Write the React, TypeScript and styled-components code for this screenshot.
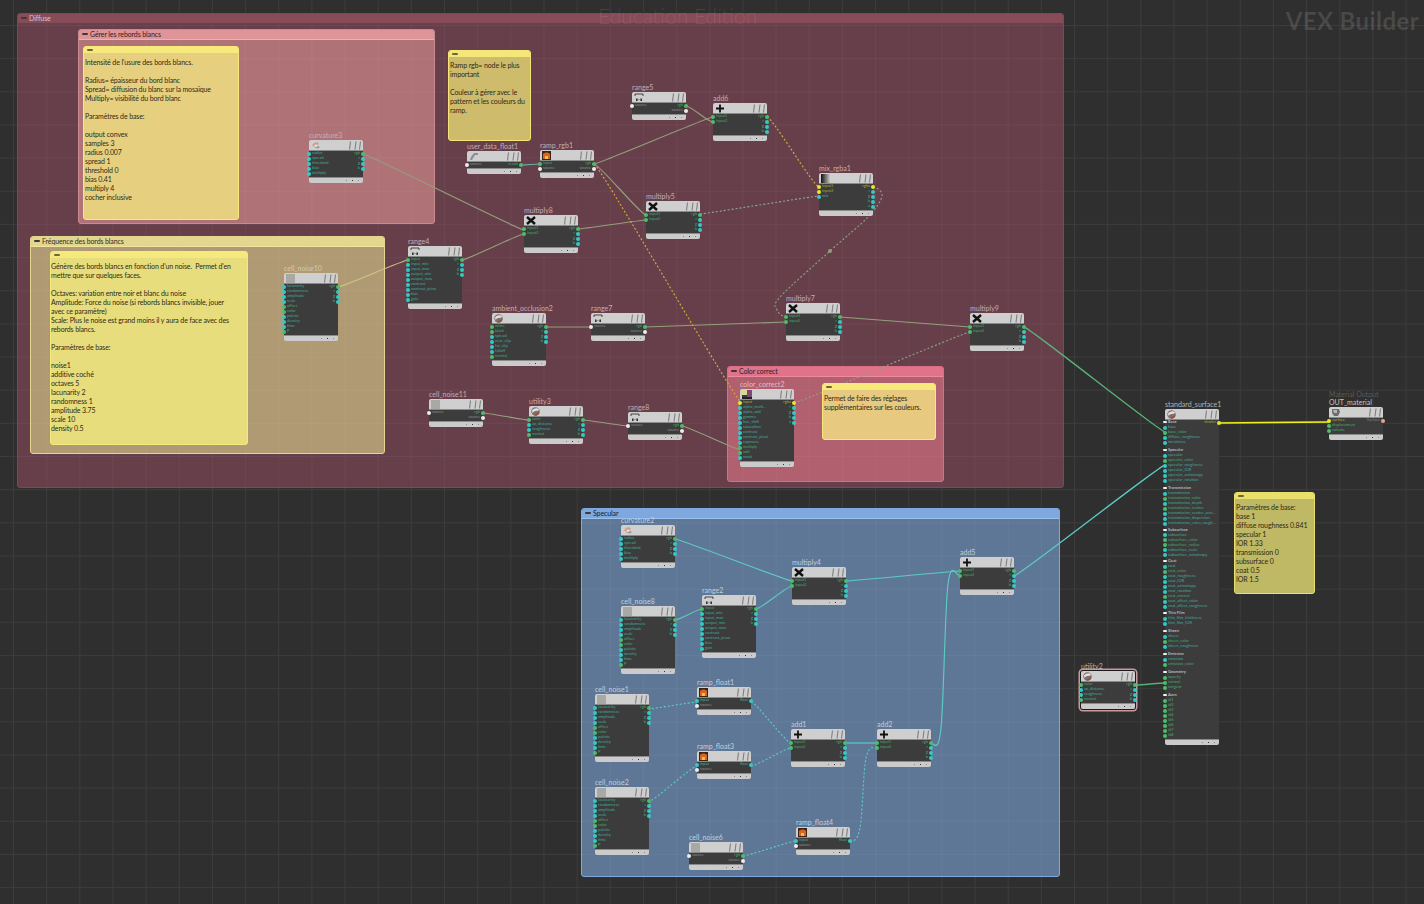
import React from 'react';
import styled, { createGlobalStyle } from 'styled-components';

const Global = createGlobalStyle`
  html, body { margin: 0; padding: 0; background: #2f2f2f; overflow: hidden; }
  body { font-family: Lato, "Noto Sans", sans-serif; }
`;

const S = {
  Canvas: styled.div`
    position: relative;
    width: 1424px;
    height: 904px;
    overflow: hidden;
    background-color: #2f2f2f;
    background-image:
      linear-gradient(to right, #3c3c3c 1px, transparent 1px),
      linear-gradient(to bottom, #3c3c3c 1px, transparent 1px);
    background-size: 33.16px 33.16px;
    background-position: 13px 25px;
  `,
  Group: styled.div<{ $x: number; $y: number; $w: number; $h: number; $bg: string; $edge: string }>`
    position: absolute;
    left: ${p => p.$x}px;
    top: ${p => p.$y}px;
    width: ${p => p.$w}px;
    height: ${p => p.$h}px;
    box-sizing: border-box;
    background: ${p => p.$bg};
    border: 1px solid ${p => p.$edge};
    border-radius: 3px;
    background-image:
      linear-gradient(to right, rgba(255,255,255,.035) 1px, transparent 1px),
      linear-gradient(to bottom, rgba(255,255,255,.035) 1px, transparent 1px);
    background-size: 33.16px 33.16px;
    background-position: ${p => ((13 - p.$x) % 33.16) - 1}px ${p => ((25 - p.$y) % 33.16) - 1}px;
  `,
  GroupBar: styled.div<{ $bg: string; $line: string; $ink: string }>`
    display: flex;
    align-items: center;
    gap: 2px;
    box-sizing: border-box;
    height: 10px;
    padding: 0 0 1px 3px;
    background: ${p => p.$bg};
    border-bottom: 1px solid ${p => p.$line};
    border-radius: 2px 2px 0 0;
    color: ${p => p.$ink};
    font-size: 7px;
    line-height: 8px;
    letter-spacing: -0.12px;
    white-space: nowrap;
  `,
  Dash: styled.span<{ $soft?: boolean }>`
    flex: none;
    width: 6px;
    height: 2px;
    background: ${p => (p.$soft ? '#6b6640' : '#3a3a3a')};
    border-radius: 1px;
  `,
  Note: styled.div<{ $x: number; $y: number; $w: number; $h: number; $bg: string; $bar: string }>`
    position: absolute;
    left: ${p => p.$x}px;
    top: ${p => p.$y}px;
    width: ${p => p.$w}px;
    height: ${p => p.$h}px;
    display: flex;
    flex-direction: column;
    box-sizing: border-box;
    background: ${p => p.$bg};
    border: 1px solid ${p => p.$bar};
    border-radius: 3px;
  `,
  NoteBar: styled.div<{ $bar: string }>`
    flex: none;
    display: flex;
    align-items: center;
    height: 6px;
    padding-left: 3px;
    background: ${p => p.$bar};
    border-radius: 2px 2px 0 0;
  `,
  NoteText: styled.div<{ $top: number; $left: number }>`
    padding: ${p => p.$top}px 0 0 ${p => p.$left}px;
    color: #2e2a14;
    font-size: 7px;
    line-height: 9px;
    letter-spacing: -0.12px;
    white-space: pre-wrap;
  `,
  Wires: styled.svg`
    position: absolute;
    left: 0;
    top: 0;
  `,
  Node: styled.div<{ $x: number; $y: number; $selected?: boolean }>`
    position: absolute;
    left: ${p => p.$x}px;
    top: ${p => p.$y}px;
    width: 54px;
    display: flex;
    flex-direction: column;
    border-radius: 2px;
    ${p => p.$selected && 'box-shadow: 0 0 0 1px #1c1c1c, 0 0 0 2.5px #c99a9d;'}
  `,
  Label: styled.div<{ $ink: string }>`
    position: absolute;
    left: 0;
    bottom: calc(100% + 1px);
    color: ${p => p.$ink};
    font-size: 7px;
    line-height: 8px;
    white-space: nowrap;
  `,
  SubLabel: styled.div`
    color: #5a5a5a;
    font-size: 7px;
    line-height: 7px;
  `,
  Head: styled.div`
    flex: none;
    height: 10px;
    display: flex;
    align-items: center;
    justify-content: space-between;
    padding: 0 1px 0 2px;
    background: #cfcfcf;
    border-bottom: 1px solid #8b8b8b;
    border-radius: 2px 2px 0 0;
  `,
  Body: styled.div`
    display: flex;
    justify-content: space-between;
    padding-bottom: 1px;
    background: #3c3c3c;
  `,
  Col: styled.div<{ $fill?: boolean }>`
    display: flex;
    flex-direction: column;
    ${p => p.$fill && 'flex: 1 1 0; min-width: 0;'}
  `,
  Row: styled.div<{ $out?: boolean; $ink: string }>`
    position: relative;
    height: 5px;
    padding: 0 3px;
    color: ${p => p.$ink};
    font-size: 4px;
    line-height: 4px;
    text-align: ${p => (p.$out ? 'right' : 'left')};
    white-space: nowrap;
  `,
  Port: styled.i<{ $out?: boolean; $color: string }>`
    position: absolute;
    top: 0.5px;
    ${p => (p.$out ? 'right: -2px;' : 'left: -2px;')}
    width: 4px;
    height: 4px;
    border-radius: 50%;
    background: ${p => p.$color};
  `,
  Section: styled.div<{ $gap: number }>`
    position: relative;
    height: 5px;
    margin-top: ${p => p.$gap}px;
    padding-left: 3px;
    color: #b9b9b9;
    font-size: 4px;
    font-weight: 700;
    line-height: 4px;
    white-space: nowrap;
  `,
  SectionTick: styled.i`
    position: absolute;
    left: -2px;
    top: 1px;
    width: 4px;
    height: 2px;
    background: #f2f2f2;
    border-radius: 1px;
  `,
  Foot: styled.div`
    flex: none;
    height: 5px;
    display: flex;
    align-items: center;
    justify-content: flex-end;
    gap: 5px;
    padding-right: 4px;
    background: #cbcbcb;
    border-top: 1px solid #8b8b8b;
    border-radius: 0 0 2px 2px;
  `,
  Pip: styled.i<{ $on?: boolean }>`
    width: 1px;
    height: 1px;
    background: ${p => (p.$on ? '#333' : '#888')};
  `,
  Mark: styled.div<{ $right?: boolean; $bold?: boolean }>`
    position: absolute;
    top: ${p => (p.$bold ? 9 : 4)}px;
    ${p => (p.$right ? 'right: 5px;' : 'left: 598px;')}
    color: rgba(255, 255, 255, ${p => (p.$bold ? 0.12 : 0.09)});
    font-size: ${p => (p.$bold ? 24 : 21)}px;
    font-weight: ${p => (p.$bold ? 700 : 300)};
    letter-spacing: ${p => (p.$bold ? 0.4 : 0)}px;
    line-height: 24px;
    white-space: nowrap;
  `,
};

type IconKind = 'mul' | 'add' | 'range' | 'noise' | 'curv' | 'ramp' | 'ball' | 'mix' | 'cc' | 'user' | 'out';

const Icon = ({ kind }: { kind: IconKind }) => {
  switch (kind) {
    case 'mul':
      return (
        <svg width="10" height="9" viewBox="0 0 10 9">
          <path d="M1 1 L9 8 M9 1 L1 8" stroke="#111" strokeWidth="2.4" />
        </svg>
      );
    case 'add':
      return (
        <svg width="10" height="9" viewBox="0 0 10 9">
          <path d="M1 4.5 H9 M5 .5 V8.5" stroke="#111" strokeWidth="1.8" />
        </svg>
      );
    case 'range':
      return (
        <svg width="10" height="9" viewBox="0 0 10 9">
          <path d="M1 3 V1 H9 V3" stroke="#222" strokeWidth=".8" fill="none" />
          <rect x="2" y="5.5" width="1.6" height="2.5" fill="#333" />
          <rect x="6.4" y="5.5" width="1.6" height="2.5" fill="#333" />
          <rect x="3.6" y="6.4" width="2.8" height=".6" fill="#777" />
        </svg>
      );
    case 'noise':
      return (
        <svg width="9" height="9" viewBox="0 0 9 9">
          <rect width="9" height="9" fill="#a8a8a4" />
        </svg>
      );
    case 'curv':
      return (
        <svg width="10" height="9" viewBox="0 0 10 9">
          <path d="M1 5 C2 1 7 0 8 3 L6 4 C5 3 4 3 3 5 Z" fill="#d79a86" />
          <path d="M3 5 C4 8 8 8 9 6 L7 5 Z" fill="#9a9a9a" />
          <circle cx="5" cy="5" r="1" fill="#eee" />
        </svg>
      );
    case 'ramp':
      return (
        <svg width="9" height="9" viewBox="0 0 9 9">
          <rect width="9" height="9" fill="#3a2418" />
          <path d="M1 8 V3 C3 1 6 1 8 3 V8 H6 V5 H3 V8 Z" fill="#d8641f" />
          <rect x="3" y="5" width="3" height="3" fill="#e8c24a" />
        </svg>
      );
    case 'ball':
      return (
        <svg width="9" height="9" viewBox="0 0 9 9">
          <circle cx="4.5" cy="4.5" r="4.2" fill="#7e6f70" />
          <path d="M1 3.5 C3 1 6 .5 8 2 L7 4 C5 3.5 3 4 1.5 6 Z" fill="#e6e0dc" />
          <path d="M3 8 C5 7 7 6 8.5 5 L8 7 L5 8.8 Z" fill="#9b4a3c" />
        </svg>
      );
    case 'mix':
      return (
        <svg width="10" height="9" viewBox="0 0 10 9">
          <defs>
            <linearGradient id="mixg" x1="0" x2="1" y1="0" y2="0">
              <stop offset="0" stopColor="#111" />
              <stop offset="1" stopColor="#ddd" />
            </linearGradient>
          </defs>
          <rect width="10" height="9" fill="url(#mixg)" />
        </svg>
      );
    case 'cc':
      return (
        <svg width="10" height="9" viewBox="0 0 10 9">
          <rect width="5" height="5" fill="#d8d890" />
          <rect x="5" width="5" height="7" fill="#7d4a78" />
          <rect y="5" width="5" height="2" fill="#3a3a3a" />
          <rect y="7" width="10" height="2" fill="#222" />
        </svg>
      );
    case 'user':
      return (
        <svg width="10" height="9" viewBox="0 0 10 9">
          <path d="M5 1 H9 V3 H6 L3 8 H1 L2 5 Z" fill="#8e8e8e" />
        </svg>
      );
    default:
      return (
        <svg width="10" height="9" viewBox="0 0 10 9">
          <path d="M1 1 H8 L9 4 L7 8 H3 L1 5 Z" fill="#6d6d6d" />
          <path d="M2 2 H6 V5 H3 Z" fill="#b5b5b5" />
        </svg>
      );
  }
};

const Bars = () => (
  <svg width="15" height="9" viewBox="0 0 15 9">
    <path d="M2.5 8.5 L3.5 .5 M8 8.5 L9 .5 M12.5 8.5 L13.5 .5" stroke="#7f7f7f" strokeWidth="1.1" />
  </svg>
);

const PORTS: Record<string, { dot: string; ink: string }> = {
  c: { dot: '#35c9c3', ink: '#42a898' },
  g: { dot: '#4fbb6c', ink: '#46a86a' },
  w: { dot: '#ececec', ink: '#8d8d8d' },
  y: { dot: '#e6e92a', ink: '#a9ad2a' },
  o: { dot: '#e3a48f', ink: '#8f7a70' },
};

// "+name" green, "!name" white, "*name" yellow, "~name" salmon, anything else cyan
const parsePort = (raw: string) => {
  const code = raw[0];
  if (code === '+') return { name: raw.slice(1), ...PORTS.g };
  if (code === '!') return { name: raw.slice(1), ...PORTS.w };
  if (code === '*') return { name: raw.slice(1), ...PORTS.y };
  if (code === '~') return { name: raw.slice(1), ...PORTS.o };
  return { name: raw, ...PORTS.c };
};

const PortRows = ({ list, out }: { list: string[]; out?: boolean }) => (
  <>
    {list.map(raw => {
      const p = parsePort(raw);
      return (
        <S.Row key={raw} $out={out} $ink={p.ink}>
          {p.name}
          <S.Port $out={out} $color={p.dot} />
        </S.Row>
      );
    })}
  </>
);

const Ports = ({ list, out }: { list: string[]; out?: boolean }) => (
  <S.Col>
    <PortRows list={list} out={out} />
  </S.Col>
);

interface INode {
  name: string;
  x: number;
  y: number;
  icon: IconKind;
  ins: string[];
  outs: string[];
  ink?: string;
  selected?: boolean;
}

const RGB = ['+rgb', 'r', 'g', 'b'];
const MUL = ['+input1', '+input2'];
const RANGE = ['+input', 'input_min', 'input_max', 'output_min', 'output_max', 'contrast', 'contrast_pivot', 'bias', 'gain'];
const NOISE = ['lacunarity', 'randomness', 'amplitude', 'scale', '+offset', '+color', 'palette', 'density', 'time', '+P'];
const CURV = ['radius', 'spread', 'threshold', 'bias', 'multiply'];
const UTIL = ['+color', 'ao_distance', 'roughness', '+normal'];
const SRC = ['!source'];
const RAMP_RGB = ['+input', '!source'];
const OUT_RGB = ['+rgb', '!source'];
const RAMP_F = ['input', '!source'];
const OUT_F = ['float'];

const PINK = '#c3aeb4';
const TAN = '#d6c8ab';
const BLUE = '#c3ced9';
const GREY = '#b4b4b4';

const NODES: INode[] = [
  { name: 'curvature3', x: 309, y: 140, icon: 'curv', ins: CURV, outs: RGB, ink: '#c9aeb0' },
  { name: 'user_data_float1', x: 467, y: 151, icon: 'user', ins: SRC, outs: ['+result'], ink: PINK },
  { name: 'ramp_rgb1', x: 540, y: 150, icon: 'ramp', ins: RAMP_RGB, outs: OUT_RGB, ink: PINK },
  { name: 'range5', x: 632, y: 92, icon: 'range', ins: SRC, outs: OUT_RGB, ink: PINK },
  { name: 'add6', x: 713, y: 103, icon: 'add', ins: MUL, outs: RGB, ink: PINK },
  { name: 'mix_rgba1', x: 819, y: 173, icon: 'mix', ins: ['*input1', '*input2', 'mix'], outs: ['*rgba', 'r', 'g', 'b', 'a'], ink: PINK },
  { name: 'multiply8', x: 524, y: 215, icon: 'mul', ins: MUL, outs: RGB, ink: PINK },
  { name: 'multiply5', x: 646, y: 201, icon: 'mul', ins: MUL, outs: RGB, ink: PINK },
  { name: 'range4', x: 408, y: 246, icon: 'range', ins: RANGE, outs: RGB, ink: PINK },
  { name: 'cell_noise10', x: 284, y: 273, icon: 'noise', ins: NOISE, outs: RGB, ink: TAN },
  { name: 'ambient_occlusion2', x: 492, y: 313, icon: 'ball', ins: ['+white', '+black', 'spread', 'near_clip', 'far_clip', 'falloff', '+normal'], outs: RGB, ink: PINK },
  { name: 'range7', x: 591, y: 313, icon: 'range', ins: SRC, outs: OUT_RGB, ink: PINK },
  { name: 'multiply7', x: 786, y: 303, icon: 'mul', ins: MUL, outs: RGB, ink: PINK },
  { name: 'multiply9', x: 970, y: 313, icon: 'mul', ins: MUL, outs: RGB, ink: PINK },
  { name: 'cell_noise11', x: 429, y: 399, icon: 'noise', ins: SRC, outs: OUT_RGB, ink: PINK },
  { name: 'utility3', x: 529, y: 406, icon: 'ball', ins: UTIL, outs: RGB, ink: PINK },
  { name: 'range8', x: 628, y: 412, icon: 'range', ins: SRC, outs: OUT_RGB, ink: PINK },
  {
    name: 'color_correct2', x: 740, y: 389, icon: 'cc',
    ins: ['*input', 'alpha_multi...', 'alpha_add', 'gamma', 'hue_shift', 'saturation', 'contrast', 'contrast_pivot', 'exposure', '+multiply', '+add', 'mask'],
    outs: ['*rgba', 'r', 'g', 'b', 'a'], ink: '#e3bcc4',
  },
  { name: 'curvature2', x: 621, y: 525, icon: 'curv', ins: CURV, outs: RGB, ink: BLUE },
  { name: 'cell_noise8', x: 621, y: 606, icon: 'noise', ins: NOISE, outs: RGB, ink: BLUE },
  { name: 'range2', x: 702, y: 595, icon: 'range', ins: RANGE, outs: RGB, ink: BLUE },
  { name: 'multiply4', x: 792, y: 567, icon: 'mul', ins: MUL, outs: RGB, ink: BLUE },
  { name: 'add5', x: 960, y: 557, icon: 'add', ins: MUL, outs: RGB, ink: BLUE },
  { name: 'cell_noise1', x: 595, y: 694, icon: 'noise', ins: NOISE, outs: RGB, ink: BLUE },
  { name: 'ramp_float1', x: 697, y: 687, icon: 'ramp', ins: RAMP_F, outs: OUT_F, ink: BLUE },
  { name: 'ramp_float3', x: 697, y: 751, icon: 'ramp', ins: RAMP_F, outs: OUT_F, ink: BLUE },
  { name: 'add1', x: 791, y: 729, icon: 'add', ins: MUL, outs: RGB, ink: BLUE },
  { name: 'add2', x: 877, y: 729, icon: 'add', ins: MUL, outs: RGB, ink: BLUE },
  { name: 'cell_noise2', x: 595, y: 787, icon: 'noise', ins: NOISE, outs: RGB, ink: BLUE },
  { name: 'cell_noise6', x: 689, y: 842, icon: 'noise', ins: SRC, outs: OUT_RGB, ink: BLUE },
  { name: 'ramp_float4', x: 796, y: 827, icon: 'ramp', ins: RAMP_F, outs: OUT_F, ink: BLUE },
  { name: 'utility2', x: 1081, y: 671, icon: 'ball', ins: UTIL, outs: RGB, ink: GREY, selected: true },
];

const SURFACE: [string, number, string[]][] = [
  ['Base', 0, ['base', '+base_color', 'diffuse_roughness', 'metalness']],
  ['Specular', 3, ['specular', '+specular_color', 'specular_roughness', 'specular_IOR', 'specular_anisotropy', 'specular_rotation']],
  ['Transmission', 3, ['transmission', '+transmission_color', 'transmission_depth', '+transmission_scatter', 'transmission_scatter_anis...', 'transmission_dispersion', 'transmission_extra_rough...']],
  ['Subsurface', 1.5, ['subsurface', '+subsurface_color', '+subsurface_radius', 'subsurface_scale', 'subsurface_anisotropy']],
  ['Coat', 1.5, ['coat', '+coat_color', 'coat_roughness', 'coat_IOR', 'coat_anisotropy', 'coat_rotation', '+coat_normal', 'coat_affect_color', 'coat_affect_roughness']],
  ['Thin Film', 2, ['thin_film_thickness', 'thin_film_IOR']],
  ['Sheen', 3, ['sheen', '+sheen_color', 'sheen_roughness']],
  ['Emission', 3, ['emission', '+emission_color']],
  ['Geometry', 3, ['+opacity', '+normal', '+tangent']],
  ['Aovs', 3, ['+id1', '+id2', '+id3', '+id4', '+id5', '+id6', '+id7', '+id8']],
];

const Foot = () => (
  <S.Foot>
    <S.Pip />
    <S.Pip $on />
    <S.Pip />
  </S.Foot>
);

const GraphNode = ({ node }: { node: INode }) => (
  <S.Node $x={node.x} $y={node.y} $selected={node.selected}>
    <S.Label $ink={node.ink ?? GREY}>{node.name}</S.Label>
    <S.Head>
      <Icon kind={node.icon} />
      <Bars />
    </S.Head>
    <S.Body>
      <Ports list={node.ins} />
      <Ports list={node.outs} out />
    </S.Body>
    <Foot />
  </S.Node>
);

const SurfaceNode = () => (
  <S.Node $x={1165} $y={409}>
    <S.Label $ink={GREY}>standard_surface1</S.Label>
    <S.Head>
      <Icon kind="ball" />
      <Bars />
    </S.Head>
    <S.Body>
      <S.Col $fill>
        {SURFACE.map(([title, gap, list]) => (
          <React.Fragment key={title}>
            <S.Section $gap={gap}>
              <S.SectionTick />
              {title}
            </S.Section>
            <PortRows list={list} />
          </React.Fragment>
        ))}
      </S.Col>
      <Ports list={['*shader']} out />
    </S.Body>
    <Foot />
  </S.Node>
);

const OutputNode = () => (
  <S.Node $x={1329} $y={407}>
    <S.Label $ink="#c4c4c4">
      <S.SubLabel>Material Output</S.SubLabel>
      OUT_material
    </S.Label>
    <S.Head>
      <Icon kind="out" />
      <Bars />
    </S.Head>
    <S.Body>
      <Ports list={['*surface', '+displacement', '+volume']} />
      <Ports list={['~Surface']} out />
    </S.Body>
    <Foot />
  </S.Node>
);

// m: optional middle points the wire has to pass through
interface IWire {
  a: [number, number];
  b: [number, number];
  c: string;
  d?: boolean;
  w?: number;
  m?: [number, number][];
}

const OLIVE = '#93a07c';
const AMBER = '#d0ac3a';
const SLATE = '#8aa6a0';
const AQUA = '#5accc4';

const WIRES: IWire[] = [
  { a: [363, 154], b: [524, 230], c: OLIVE },
  { a: [338, 287], b: [408, 260], c: '#c8c884' },
  { a: [462, 260], b: [524, 234], c: OLIVE },
  { a: [578, 229], b: [646, 220], c: OLIVE },
  { a: [521, 165], b: [540, 164], c: '#6fb7b4' },
  { a: [594, 164], b: [713, 117], c: OLIVE },
  { a: [594, 164], b: [646, 215], c: OLIVE },
  { a: [594, 164], b: [741, 402], c: AMBER, d: true },
  { a: [686, 106], b: [713, 122], c: OLIVE },
  { a: [767, 117], b: [819, 187], c: AMBER, d: true },
  { a: [700, 214], b: [819, 196], c: SLATE, d: true },
  { a: [873, 187], b: [786, 317], c: '#8e9f7e', d: true, m: [[882, 196], [868, 217], [830, 251], [780, 297], [777, 310]] },
  { a: [546, 327], b: [591, 327], c: OLIVE },
  { a: [645, 327], b: [786, 322], c: OLIVE },
  { a: [840, 317], b: [970, 327], c: OLIVE },
  { a: [794, 403], b: [970, 332], c: '#8e9f7e', d: true },
  { a: [483, 413], b: [529, 420], c: OLIVE },
  { a: [583, 420], b: [628, 426], c: OLIVE },
  { a: [682, 426], b: [741, 450], c: OLIVE },
  { a: [1024, 327], b: [1165, 432], c: '#5ab57a', w: 1.3 },
  { a: [1014, 576], b: [1165, 465], c: AQUA, w: 1.3 },
  { a: [1218, 423], b: [1329, 422], c: '#55550f', w: 2.6 },
  { a: [1218, 423], b: [1329, 422], c: '#eeee20', w: 1.4 },
  { a: [1136, 685], b: [1165, 683], c: '#4fb56f', w: 1.3 },
  { a: [675, 539], b: [792, 581], c: AQUA },
  { a: [675, 620], b: [702, 609], c: AQUA },
  { a: [756, 609], b: [792, 586], c: AQUA },
  { a: [846, 581], b: [960, 571], c: AQUA },
  { a: [931, 743], b: [960, 576], c: AQUA, m: [[941, 728], [948, 584]] },
  { a: [845, 743], b: [877, 743], c: AQUA },
  { a: [648, 709], b: [697, 702], c: AQUA, d: true },
  { a: [751, 702], b: [791, 743], c: AQUA, d: true },
  { a: [648, 802], b: [697, 766], c: AQUA, d: true },
  { a: [751, 766], b: [791, 748], c: AQUA, d: true },
  { a: [743, 856], b: [796, 841], c: AQUA, d: true },
  { a: [850, 841], b: [877, 748], c: AQUA, d: true, m: [[860, 828], [866, 758]] },
];

// catmull-rom through the points, flat at both ports
const wirePath = ({ a, b, m }: IWire) => {
  const pts = [a, ...(m ?? []), b];
  let out = `M${a[0]} ${a[1]}`;
  for (let i = 0; i < pts.length - 1; i++) {
    const p = pts[i];
    const q = pts[i + 1];
    const h = Math.min(5, Math.abs(q[0] - p[0]) / 3);
    const prev = pts[i - 1];
    const next = pts[i + 2];
    const c1 = prev ? [p[0] + (q[0] - prev[0]) / 6, p[1] + (q[1] - prev[1]) / 6] : [p[0] + h, p[1]];
    const c2 = next ? [q[0] - (next[0] - p[0]) / 6, q[1] - (next[1] - p[1]) / 6] : [q[0] - h, q[1]];
    out += ` C${c1[0]} ${c1[1]} ${c2[0]} ${c2[1]} ${q[0]} ${q[1]}`;
  }
  return out;
};

const GROUPS = [
  { title: 'Diffuse', x: 17, y: 13, w: 1047, h: 475, bg: '#673f4a', edge: '#7a4a56', bar: '#884c58', line: '#6d3f4b', ink: '#d8c4c8' },
  { title: 'Gérer les rebords blancs', x: 78, y: 29, w: 357, h: 195, bg: '#af7377', edge: '#c98b8f', bar: '#df9498', line: '#efb0b2', ink: '#33201f' },
  { title: 'Fréquence des bords blancs', x: 30, y: 236, w: 355, h: 218, bg: '#b09a74', edge: '#e3d68f', bar: '#e3d68f', line: '#efe4a0', ink: '#332e1a' },
  { title: 'Color correct', x: 727, y: 366, w: 217, h: 116, bg: '#b0606f', edge: '#d86f86', bar: '#e0738a', line: '#ef8a9e', ink: '#301a1f' },
  { title: 'Specular', x: 581, y: 508, w: 479, h: 369, bg: '#5f7796', edge: '#7ea8de', bar: '#7ea8de', line: '#9ac0ef', ink: '#16202e' },
];

const NOTES = [
  {
    x: 83, y: 46, w: 156, h: 174, bg: '#e6d080', bar: '#f8e97c', top: 5, left: 1,
    text: `Intensité de l'usure des bords blancs.

Radius= épaisseur du bord blanc
Spread= diffusion du blanc sur la mosaïque
Multiply= visibilité du bord blanc

Paramètres de base:

output convex
samples 3
radius 0.007
spread 1
threshold 0
bias 0.41
multiply 4
cocher inclusive`,
  },
  {
    x: 448, y: 50, w: 83, h: 91, bg: '#cebb6c', bar: '#f5e67a', top: 4, left: 1,
    text: `Ramp rgb= node le plus
important

Couleur à gérer avec le
pattern et les couleurs du
ramp.`,
  },
  {
    x: 50, y: 251, w: 198, h: 194, bg: '#e8dd7d', bar: '#f5e97e', top: 4, left: 0,
    text: `Génère des bords blancs en fonction d'un noise.  Permet d'en
mettre que sur quelques faces.

Octaves: variation entre noir et blanc du noise
Amplitude: Force du noise (si rebords blancs invisible, jouer
avec ce paramètre)
Scale: Plus le noise est grand moins il y aura de face avec des
rebords blancs.

Paramètres de base:

noise1
additive coché
octaves 5
lacunarity 2
randomness 1
amplitude 3.75
scale 10
density 0.5`,
  },
  {
    x: 822, y: 383, w: 114, h: 57, bg: '#e7c97f', bar: '#f8e97c', top: 4, left: 1,
    text: `Permet de faire des réglages
supplémentaires sur les couleurs.`,
  },
  {
    x: 1234, y: 492, w: 81, h: 102, bg: '#bfb864', bar: '#e8e06a', top: 4, left: 1,
    text: `Paramètres de base:
base 1
diffuse roughness 0.841
specular 1
IOR 1.33
transmission 0
subsurface 0
coat 0.5
IOR 1.5`,
  },
];

const App = () => (
  <S.Canvas>
    <Global />
    {GROUPS.map(g => (
      <S.Group key={g.title} $x={g.x} $y={g.y} $w={g.w} $h={g.h} $bg={g.bg} $edge={g.edge}>
        <S.GroupBar $bg={g.bar} $line={g.line} $ink={g.ink}>
          <S.Dash />
          {g.title}
        </S.GroupBar>
      </S.Group>
    ))}
    <S.Wires width="1424" height="904" viewBox="0 0 1424 904">
      {WIRES.map((w, i) => (
        <path
          key={i}
          d={wirePath(w)}
          fill="none"
          stroke={w.c}
          strokeWidth={w.w ?? 1.15}
          strokeDasharray={w.d ? '2 2' : undefined}
        />
      ))}
      <circle cx="830" cy="251" r="2" fill="#8e9f7e" />
    </S.Wires>
    {NOTES.map(n => (
      <S.Note key={n.x} $x={n.x} $y={n.y} $w={n.w} $h={n.h} $bg={n.bg} $bar={n.bar}>
        <S.NoteBar $bar={n.bar}>
          <S.Dash $soft />
        </S.NoteBar>
        <S.NoteText $top={n.top} $left={n.left}>{n.text}</S.NoteText>
      </S.Note>
    ))}
    {NODES.map(n => (
      <GraphNode key={n.name} node={n} />
    ))}
    <SurfaceNode />
    <OutputNode />
    <S.Mark>Education Edition</S.Mark>
    <S.Mark $right $bold>VEX Builder</S.Mark>
  </S.Canvas>
);

export default App;
